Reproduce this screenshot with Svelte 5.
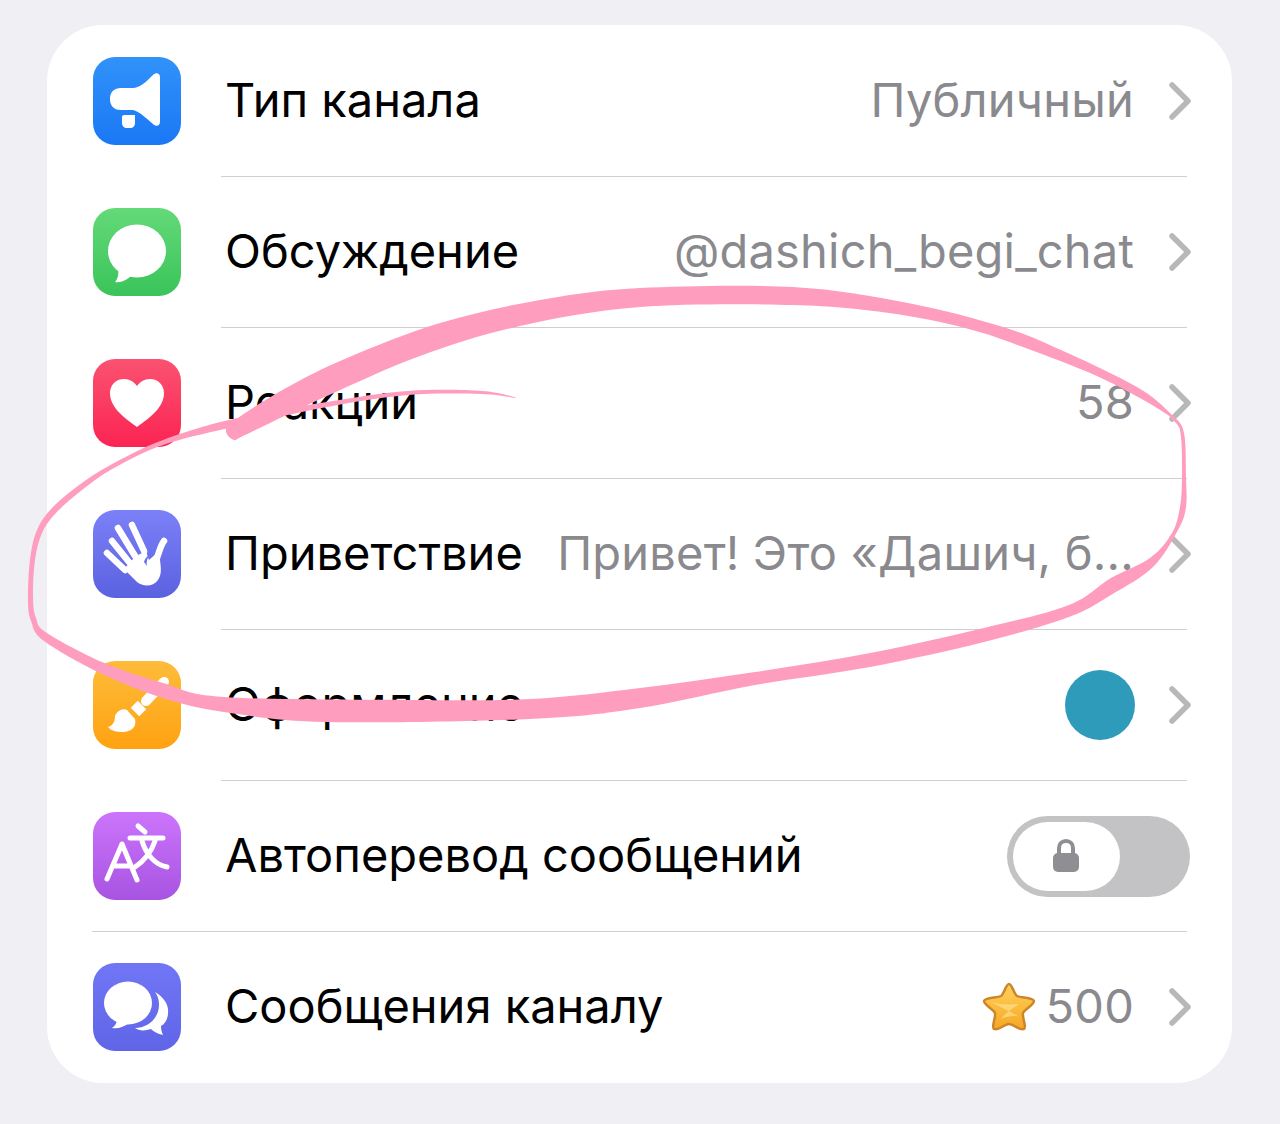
<script>
  const outline = [[516,398],[482,391],[408,391],[327,402],[229,420],[163,440],[114,463],[82,483],[53,507],[37,530],[30,560],[28,600],[31,621],[44,641],[100,673],[163,698],[224,712],[327,722],[530,719],[640,708],[755,685],[870,667],[984,642],[1069,617],[1111,595],[1153,567],[1178,530],[1186,507],[1186,477],[1184,433],[1172,415],[1137,387],[1061,350],[1003,327],[908,303],[793,287],[640,288],[540,300],[440,323],[347,358],[286,388],[235,420],[226,431],[234,440],[245,435],[327,396],[420,356],[520,326],[640,307],[793,305],[889,313],[965,328],[1023,347],[1099,377],[1157,408],[1176,423],[1181,437],[1182,477],[1180,507],[1172,533],[1150,558],[1111,578],[1069,605],[984,628],[870,653],[755,672],[640,688],[531,699],[408,700],[224,697],[163,683],[102,662],[47,633],[36,618],[33,597],[35,560],[42,533],[56,513],[82,490],[114,468],[163,445],[229,428],[327,407],[408,395],[482,394]];
  function smooth(p) {
    const n = p.length;
    let d = `M${p[0][0]} ${p[0][1]}`;
    for (let i = 0; i < n; i++) {
      const a = p[(i - 1 + n) % n], b = p[i], c = p[(i + 1) % n], e = p[(i + 2) % n];
      const c1 = [b[0] + (c[0] - a[0]) / 6, b[1] + (c[1] - a[1]) / 6];
      const c2 = [c[0] - (e[0] - b[0]) / 6, c[1] - (e[1] - b[1]) / 6];
      d += `C${c1[0].toFixed(1)} ${c1[1].toFixed(1)} ${c2[0].toFixed(1)} ${c2[1].toFixed(1)} ${c[0]} ${c[1]}`;
    }
    return d + 'Z';
  }
  const scribble = smooth(outline);
</script>

{#snippet chevron()}
  <svg class="chev" width="24" height="38" viewBox="0 0 24 38"><path d="M4 3 L20 19 L4 35" fill="none" stroke="#b8b8ba" stroke-width="5.5" stroke-linecap="round" stroke-linejoin="round"/></svg>
{/snippet}

<main class="page">
  <section class="card">
    <div class="row first">
      <div class="icon blue">
        <svg viewBox="0 0 88 88"><path fill="#fff" d="M28 31H40C46 31 52 26 60 18C63 15 67 16 67 20V65C67 69 63 70 60 67C54 62 46 54 40 53H28C20 53 17 48 17 42C17 36 20 31 28 31Z"/><path fill="#fff" d="M29 60C29 58 31 58 33 58H42V66C42 69 40 71 37 71H34C31 71 29 69 29 66Z"/></svg>
      </div>
      <span class="title">Тип канала</span>
      <span class="value">Публичный</span>
      {@render chevron()}
    </div>
    <div class="sep"></div>
    <div class="row">
      <div class="icon green">
        <svg viewBox="0 0 88 88"><ellipse cx="44" cy="43" rx="29" ry="26.5" fill="#fff"/><path fill="#fff" d="M25 58C26 65 25 71 22 74C28 75 34 72 39 67Z"/></svg>
      </div>
      <span class="title">Обсуждение</span>
      <span class="value">@dashich_begi_chat</span>
      {@render chevron()}
    </div>
    <div class="sep"></div>
    <div class="row">
      <div class="icon red">
        <svg viewBox="0 0 88 88"><path fill="#fff" d="M44 68C30 58 17 48 17 34C17 26 23 20 31 20C37 20 41 23 44 27C47 23 51 20 57 20C65 20 71 26 71 34C71 48 58 58 44 68Z"/></svg>
      </div>
      <span class="title">Реакции</span>
      <span class="value">58</span>
      {@render chevron()}
    </div>
    <div class="sep"></div>
    <div class="row">
      <div class="icon indigo">
        <svg viewBox="0 0 88 88">
          <g stroke="#fff" stroke-width="6.5" stroke-linecap="round" fill="none"><path d="M39 15L51 41"/><path d="M25 18L42 46"/><path d="M19 31L36 52"/><path d="M14 43L32 60"/><path d="M71 31C67 36 66 44 62 53"/></g>
          <path fill="#fff" d="M24 52L44 72C50 77 60 77 65 70C69 64 68 58 67 50L65 42L56 50L53 41L43 46L37 52L32 58Z"/>
          <path d="M51 52C52 48 56 44 59 43C55 47 53 50 54 56" fill="#6a70e8"/>
        </svg>
      </div>
      <span class="title">Приветствие</span>
      <span class="value">Привет! Это «Дашич, б...</span>
      {@render chevron()}
    </div>
    <div class="sep"></div>
    <div class="row">
      <div class="icon orange">
        <svg viewBox="0 0 88 88">
          <path d="M71 21L53 40" stroke="#fff" stroke-width="10" stroke-linecap="round" fill="none"/>
          <path d="M49 44L42 51" stroke="#fff" stroke-width="12" fill="none"/>
          <path fill="#fff" d="M15 66C20 65 22 60 22 55C24 50 30 47 34 49L42 58C44 66 38 71 30 71C24 71 18 70 15 66Z"/>
        </svg>
      </div>
      <span class="title">Оформление</span>
      <span class="dot"></span>
      {@render chevron()}
    </div>
    <div class="sep"></div>
    <div class="row">
      <div class="icon purple">
        <svg viewBox="0 0 88 88"><g fill="none" stroke="#fff" stroke-width="5" stroke-linecap="round"><path d="M29 32L14 67M29 32L44 68M22 54H36"/><path d="M45 14L52 20M37 26H70M62 29C58 41 51 49 42 55M49 29C53 42 62 53 74 55"/></g></svg>
      </div>
      <span class="title">Автоперевод сообщений</span>
      <span class="toggle">
        <span class="knob">
          <svg class="lock" width="28" height="36" viewBox="0 0 28 36"><path d="M7 17V10C7 6 10 3 14 3C18 3 21 6 21 10V17" fill="none" stroke="#8e8e93" stroke-width="4"/><rect x="1" y="15" width="26" height="19" rx="5" fill="#8e8e93"/></svg>
        </span>
      </span>
    </div>
    <div class="sep full"></div>
    <div class="row">
      <div class="icon violet">
        <svg viewBox="0 0 88 88"><ellipse cx="35" cy="40" rx="24" ry="21.5" fill="#fff"/><path fill="#fff" d="M24 56C24 60 22 63 19 65C25 66 31 64 36 60Z"/><path fill="#fff" d="M62 29C72 35 76 43 75 50C75 56 72 61 68 63C68 67 69 70 70 72C65 71 60 68 58 66C52 68 46 68 42 65C55 65 66 55 66 42C66 37 65 33 62 29Z"/></svg>
      </div>
      <span class="title">Сообщения каналу</span>
      <span class="stars">
        <svg width="54" height="52" viewBox="0 0 54 52">
          <defs><linearGradient id="st" x1="0" y1="0" x2="0" y2="1"><stop offset="0" stop-color="#ffd25c"/><stop offset="1" stop-color="#f6a722"/></linearGradient></defs>
          <path d="M27 3C30 3 32 13 35 15C39 17 51 16 52 20C52 24 43 28 41 32C40 37 45 46 42 48C38 50 31 43 27 43C23 43 16 50 12 48C9 46 14 37 13 32C11 28 2 24 2 20C3 16 15 17 19 15C22 13 24 3 27 3Z" fill="url(#st)" stroke="#cc8529" stroke-width="2.5" stroke-linejoin="round"/>
          <path d="M7 20C16 24 28 24 37 23C31 27 24 31 19 38C26 35 32 34 38 36" fill="#ffe08a" fill-opacity="0.7"/>
        </svg>
      </span>
      <span class="value count">500</span>
      {@render chevron()}
    </div>
    <svg class="scribble" width="1280" height="1124" viewBox="0 0 1280 1124"><path d={scribble} fill="#ff9dbf" fill-rule="nonzero"/></svg>
  </section>
</main>

<style>
  :global(body) { margin: 0; background: #efeff4; }
  .page { padding: 25px 48px 41px 47px; height: 1058px; font-family: "Inter", "Liberation Sans", sans-serif; }
  .card { background: #fff; border-radius: 56px; height: 1058px; box-sizing: border-box; padding-top: 1px; }
  .row { height: 150px; display: flex; align-items: center; padding: 0 40px 0 46px; }
  .sep { height: 1px; background: #cfcfd1; margin: 0 45px 0 174px; }
  .sep.full { margin-left: 45px; }
  .icon { width: 88px; height: 88px; border-radius: 22px; flex: none; margin-right: 44px; overflow: hidden; }
  .icon svg { display: block; width: 88px; height: 88px; }
  .blue { background: linear-gradient(#3192fa, #1a78f5); }
  .green { background: linear-gradient(#64d978, #3ac45a); }
  .red { background: linear-gradient(#fb5272, #fb2452); }
  .indigo { background: linear-gradient(#7c80f8, #5b62e0); }
  .orange { background: linear-gradient(#fdbc3a, #ffa211); }
  .purple { background: linear-gradient(#cc74fb, #a754e2); }
  .violet { background: linear-gradient(#7076f5, #5f65e6); }
  .title { font-size: 47px; color: #000; white-space: nowrap; flex: 1; margin-bottom: 3px; }
  .value { font-size: 47px; color: #8a8a8e; white-space: nowrap; margin: 0 34px 3px 0; letter-spacing: 0.2px; }
  .chev { flex: none; }
  .dot { width: 70px; height: 70px; border-radius: 50%; background: #2f9bbb; margin-right: 33px; }
  .toggle { width: 183px; height: 81px; border-radius: 41px; background: #c3c3c5; margin-right: 2px; box-sizing: border-box; padding: 6px; }
  .knob { display: flex; align-items: center; justify-content: center; width: 107px; height: 69px; border-radius: 35px; background: #fff; }
  .lock { margin-right: 2px; }
  .stars { display: flex; margin-right: 10px; }
  .scribble { position: absolute; left: 0; top: 0; pointer-events: none; }
</style>
